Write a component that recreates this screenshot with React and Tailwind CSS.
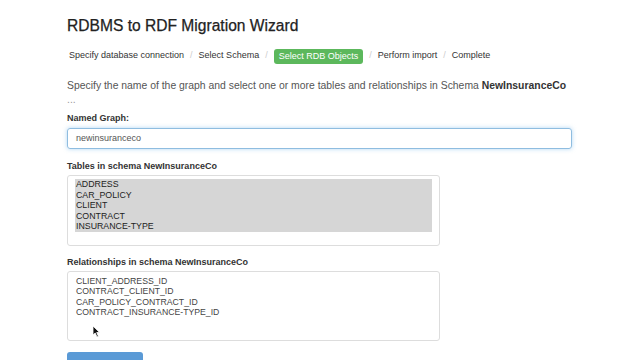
import React from 'react';

const steps = ['Specify database connection', 'Select Schema', 'Select RDB Objects', 'Perform import', 'Complete'];
const tables = ['ADDRESS', 'CAR_POLICY', 'CLIENT', 'CONTRACT', 'INSURANCE-TYPE'];
const relationships = ['CLIENT_ADDRESS_ID', 'CONTRACT_CLIENT_ID', 'CAR_POLICY_CONTRACT_ID', 'CONTRACT_INSURANCE-TYPE_ID'];

const App = () => {
  return (
    <div
      className="w-[640px] h-[360px] overflow-hidden bg-white text-[#333] relative"
      style={{ fontFamily: '"Liberation Sans", Arial, sans-serif' }}
    >
      <div className="pl-[67px] pr-[68px] pt-[16px]">
        <h1 className="text-[15.6px] leading-[20px] text-[#222] [-webkit-text-stroke:0.25px_#222]">RDBMS to RDF Migration Wizard</h1>

        <div className="mt-[12px] flex items-center h-[16px] text-[9px] text-[#333]">
          {steps.map((s, i) => (
            <React.Fragment key={s}>
              {i > 0 && <span className="mx-[6px] text-[#ccc]">/</span>}
              {s === 'Select RDB Objects' ? (
                <span className="bg-[#5cb85c] text-white rounded-[3px] px-[5px] h-[15px] leading-[15px]">{s}</span>
              ) : (
                <span className={i === 0 ? 'ml-[2px]' : ''}>{s}</span>
              )}
            </React.Fragment>
          ))}
        </div>

        <p className="mt-[15px] text-[10.4px] leading-[14px] text-[#555]">
          Specify the name of the graph and select one or more tables and relationships in Schema{' '}
          <b className="text-[#333]">NewInsuranceCo</b>
          <br />
          <span className="text-[#999]">...</span>
        </p>

        <div className="mt-[5px] text-[9px] font-bold leading-[12px]">Named Graph:</div>
        <div className="mt-[4px] h-[21px] border border-[#8fbde0] rounded-[3px] shadow-[0_0_4px_rgba(102,175,233,0.5)] flex items-center pl-[8px] text-[9px] text-[#555]">
          newinsuranceco
        </div>

        <div className="mt-[11px] text-[9px] font-bold leading-[12px]">Tables in schema NewInsuranceCo</div>
        <div className="mt-[3px] w-[373px] h-[71px] border border-[#ddd] rounded-[3px] pt-[3px] px-[7px]">
          <div className="bg-[#d6d6d6]">
            {tables.map((t) => (
              <div key={t} className="text-[8.8px] leading-[10.6px] pl-[1px] text-[#222]">{t}</div>
            ))}
          </div>
        </div>

        <div className="mt-[10px] text-[9px] font-bold leading-[12px]">Relationships in schema NewInsuranceCo</div>
        <div className="mt-[3px] w-[373px] h-[70px] border border-[#ddd] rounded-[3px] pt-[4px] px-[8px]">
          {relationships.map((r) => (
            <div key={r} className="text-[8.7px] leading-[10.4px] text-[#444]">{r}</div>
          ))}
        </div>

        <div className="mt-[11px] w-[76px] h-[20px] bg-[#5a9ad6] rounded-[3px]"></div>
      </div>

      <svg className="absolute left-[92px] top-[325px]" width="9" height="13" viewBox="0 0 9 13">
        <path d="M1 1 L1 10 L3.2 8 L5 12 L6.4 11.3 L4.7 7.5 L7.6 7.5 Z" fill="#111" stroke="#fff" strokeWidth="0.8" />
      </svg>
    </div>
  );
};

export default App;
